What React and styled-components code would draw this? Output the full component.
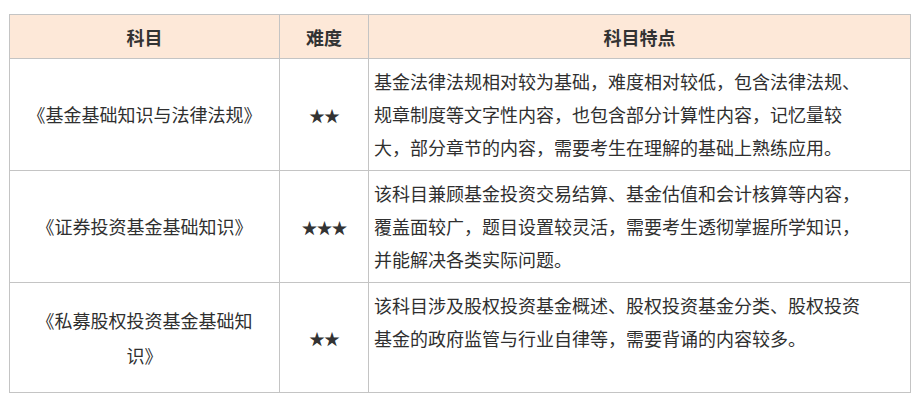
import React from "react";
import styled, { createGlobalStyle } from "styled-components";

const GlobalStyle = createGlobalStyle`
  html, body { margin: 0; padding: 0; background: #ffffff; }
  body {
    font-family: "Noto Sans CJK SC", "Noto Sans", sans-serif;
    color: #333333;
    text-spacing-trim: space-all;
  }
`;

const Page = styled.div`
  padding: 14px 0 0 9px;
`;

const Table = styled.table`
  border-collapse: collapse;
  table-layout: fixed;
  width: 901px;
  font-size: 18px;
  color: #2f2f2f;
  text-spacing-trim: space-all;
`;

const HeadCell = styled.th`
  height: 43px;
  padding: 0;
  background: #fde8d8;
  border: 1px solid #c4c4c4;
  font-weight: 700;
  font-size: 18px;
  color: #333333;
  text-align: center;
  vertical-align: middle;
  line-height: 24px;
`;

const Row = styled.tr`
  height: 110px;
`;

const NameCell = styled.td`
  padding: 0 10px;
  border: 1px solid #c4c4c4;
  text-align: center;
  vertical-align: middle;
  line-height: 35px;
`;

const StarCell = styled.td`
  padding: 0;
  border: 1px solid #c4c4c4;
  text-align: center;
  vertical-align: middle;
  font-size: 16px;
  letter-spacing: -1px;
  color: #333333;
`;

const DescCell = styled.td`
  padding: 6px 40px 6px 5px;
  border: 1px solid #c4c4c4;
  text-align: left;
  vertical-align: top;
  line-height: 33px;
`;

const rows = [
  {
    name: "《基金基础知识与法律法规》",
    stars: 2,
    desc: "基金法律法规相对较为基础，难度相对较低，包含法律法规、规章制度等文字性内容，也包含部分计算性内容，记忆量较大，部分章节的内容，需要考生在理解的基础上熟练应用。",
  },
  {
    name: "《证券投资基金基础知识》",
    stars: 3,
    desc: "该科目兼顾基金投资交易结算、基金估值和会计核算等内容，覆盖面较广，题目设置较灵活，需要考生透彻掌握所学知识，并能解决各类实际问题。",
  },
  {
    name: "《私募股权投资基金基础知识》",
    stars: 2,
    desc: "该科目涉及股权投资基金概述、股权投资基金分类、股权投资基金的政府监管与行业自律等，需要背诵的内容较多。",
  },
];

export default function App() {
  return (
    <>
      <GlobalStyle />
      <Page>
        <Table>
          <colgroup>
            <col style={{ width: 270 }} />
            <col style={{ width: 89 }} />
            <col style={{ width: 542 }} />
          </colgroup>
          <thead>
            <tr>
              <HeadCell>科目</HeadCell>
              <HeadCell>难度</HeadCell>
              <HeadCell>科目特点</HeadCell>
            </tr>
          </thead>
          <tbody>
            {rows.map((r) => (
              <Row key={r.name}>
                <NameCell>{r.name}</NameCell>
                <StarCell>{"★".repeat(r.stars)}</StarCell>
                <DescCell>{r.desc}</DescCell>
              </Row>
            ))}
          </tbody>
        </Table>
      </Page>
    </>
  );
}
